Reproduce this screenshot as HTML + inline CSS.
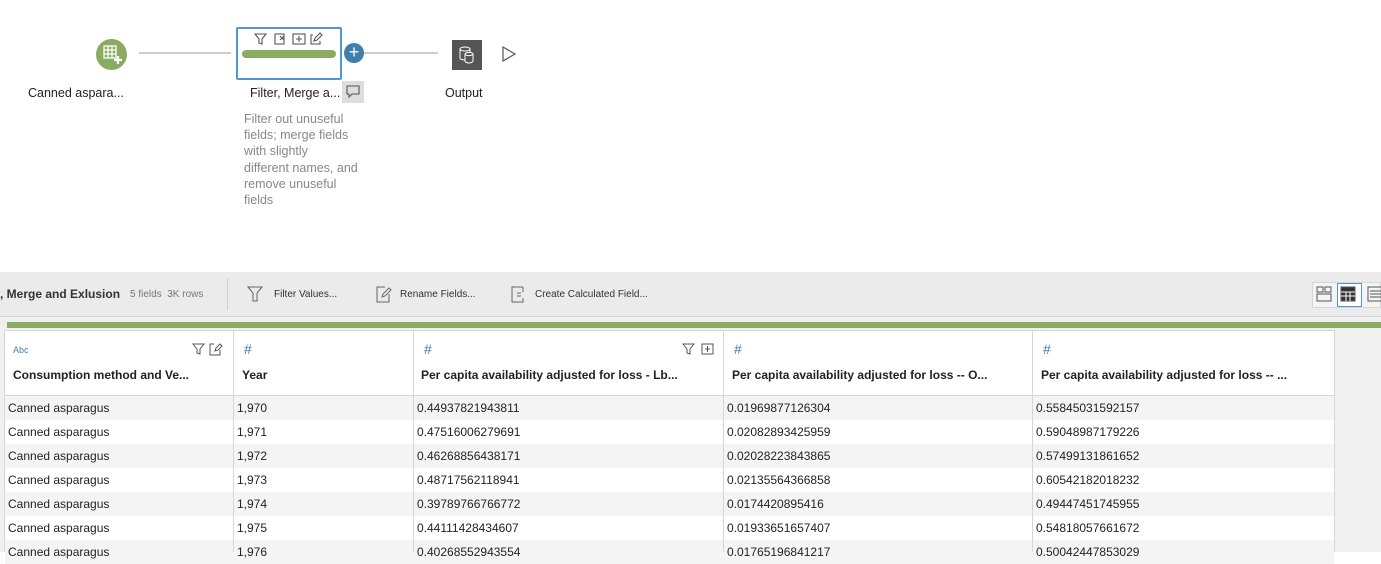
<!DOCTYPE html>
<html><head><style>
*{box-sizing:border-box;margin:0;padding:0}
body{width:1381px;height:552px;overflow:hidden;background:#fff;font-family:"Liberation Sans",sans-serif;position:relative;color:#333}
.a{position:absolute}
.lbl{font-size:12.5px;color:#222;white-space:nowrap}
.tb{font-size:10px;color:#333}
.hd{font-size:12px;font-weight:bold;color:#222}
.row{position:absolute;left:5px;width:1329px;height:24px;font-size:12px;color:#222}
.row span{position:absolute;top:5px}
.cl{position:absolute;top:330px;bottom:0;width:1px;background:#d6d6d6}
</style></head><body>
<!-- flow -->
<div class="a" style="left:139px;top:52px;width:92px;height:2px;background:#ccc"></div>
<div class="a" style="left:362px;top:52px;width:76px;height:2px;background:#ccc"></div>
<div class="a" style="left:96px;top:39px;width:31px;height:31px;border-radius:50%;background:#8aab62"></div>
<svg class="a" style="left:102px;top:44px" width="22" height="22" viewBox="0 0 22 22" fill="none" stroke="#fff" stroke-width="1.3"><rect x="2" y="2" width="12" height="12"/><path d="M2 6h12M2 10h12M6 2v12M10 2v12"/><path d="M16 12v8M12 16h8" stroke-width="2.2"/></svg>
<div class="a lbl" style="left:28px;top:86px">Canned aspara...</div>
<div class="a" style="left:236px;top:27px;width:106px;height:53px;border:2px solid #4f97d8;border-radius:2px;background:#fff"></div>
<div class="a" style="left:242px;top:50px;width:94px;height:8px;border-radius:4px;background:#8aab62"></div>
<svg class="a" style="left:254px;top:32px" width="74" height="14" viewBox="0 0 74 14" fill="none" stroke="#555" stroke-width="1.1"><path d="M1 2h11L8 7v5L5 11V7z"/><rect x="21" y="2" width="9" height="10"/><path d="M26 4l4 4M30 4l-4 4"/><rect x="39" y="2" width="12" height="10"/><path d="M42 7h6M45 4v6"/><path d="M59 3h-2v9h9v-3M60 9l1-3 5-5 2 2-5 5z"/></svg>
<div class="a" style="left:344px;top:43px;width:20px;height:20px;border-radius:50%;background:#3f7fae"></div>
<div class="a" style="left:344px;top:42px;width:20px;height:20px;color:#fff;font-size:18px;text-align:center;line-height:21px">+</div>
<div class="a" style="left:452px;top:40px;width:30px;height:30px;background:#555"></div>
<svg class="a" style="left:456px;top:44px" width="22" height="22" viewBox="0 0 22 22" fill="none" stroke="#fff" stroke-width="1"><ellipse cx="9" cy="5" rx="5" ry="2"/><path d="M4 5v9c0 1 2 2 5 2M14 5v3"/><ellipse cx="13" cy="10" rx="4" ry="1.6"/><path d="M9 10v7c0 1 2 2 4 2s4-1 4-2v-7"/></svg>
<svg class="a" style="left:501px;top:46px" width="16" height="16" viewBox="0 0 16 16"><path d="M2 1l12 7-12 7z" fill="none" stroke="#555" stroke-width="1.2"/></svg>
<div class="a lbl" style="left:250px;top:86px">Filter, Merge a...</div>
<div class="a" style="left:342px;top:81px;width:22px;height:22px;background:#ddd"></div>
<svg class="a" style="left:346px;top:85px" width="14" height="14" viewBox="0 0 14 14" fill="none" stroke="#555" stroke-width="1.1"><path d="M1 1h12v8H6l-3 3V9H1z"/></svg>
<div class="a lbl" style="left:445px;top:86px">Output</div>
<div class="a" style="left:244px;top:111px;font-size:12.5px;line-height:16.2px;color:#888">Filter out unuseful<br>fields; merge fields<br>with slightly<br>different names, and<br>remove unuseful<br>fields</div>
<!-- toolbar -->
<div class="a" style="left:0;top:272px;width:1381px;height:45px;background:#ebebeb;border-bottom:1px solid #d6d6d6"></div>
<div class="a" style="left:0;top:287px;font-size:12px;font-weight:bold;color:#333">, Merge and Exlusion</div>
<div class="a tb" style="left:130px;top:289px;color:#777">5 fields&nbsp;&nbsp;3K rows</div>
<div class="a" style="left:227px;top:278px;width:1px;height:32px;background:#d0d0d0"></div>
<svg class="a" style="left:247px;top:285px" width="16" height="18" viewBox="0 0 16 18" fill="none" stroke="#666" stroke-width="1"><path d="M1 2h14L10 8v8H6V8z"/></svg>
<div class="a tb" style="left:274px;top:289px">Filter Values...</div>
<svg class="a" style="left:376px;top:285px" width="16" height="18" viewBox="0 0 16 18" fill="none" stroke="#666" stroke-width="1"><path d="M9 2H1v15h12V9M6 12l1-3 6-6 2 2-6 6z"/></svg>
<div class="a tb" style="left:400px;top:289px">Rename Fields...</div>
<svg class="a" style="left:511px;top:285px" width="14" height="18" viewBox="0 0 14 18" fill="none" stroke="#666" stroke-width="1"><path d="M12 2H1v15h11v-4M12 7V2M6 8h4M6 11h4"/></svg>
<div class="a tb" style="left:535px;top:289px">Create Calculated Field...</div>
<div class="a" style="left:1312px;top:282px;width:69px;height:26px;background:#f4f4f4;border:1px solid #d6d6d6"></div>
<div class="a" style="left:1337px;top:283px;width:25px;height:24px;border:1px solid #4f97d8;background:#fff"></div>
<svg class="a" style="left:1316px;top:286px" width="65" height="17" viewBox="0 0 65 17" fill="none" stroke="#555" stroke-width="1"><rect x="1" y="1" width="6" height="5"/><rect x="9" y="1" width="6" height="5"/><rect x="1" y="8" width="14" height="7"/><rect x="25" y="1" width="14" height="14" fill="#333"/><path d="M25 6h14M25 10h14M30 6v9M34 6v9" stroke="#fff"/><rect x="52" y="1" width="14" height="14"/><path d="M54 5h12M54 8h12M54 11h12"/></svg>
<!-- grid area -->
<div class="a" style="left:0;top:317px;width:1381px;height:235px;background:#f0f0f0"></div>
<div class="a" style="left:7px;top:322px;width:1374px;height:6px;background:#8aab62"></div>
<div class="a" style="left:4px;top:330px;width:1331px;height:222px;background:#fff;border-left:1px solid #d6d6d6;border-top:1px solid #d6d6d6"></div>
<div class="a" style="left:5px;top:395px;width:1330px;height:1px;background:#d6d6d6"></div>
<div class="row" style="top:396px;background:#f4f4f4"></div>
<div class="row" style="top:444px;background:#f4f4f4"></div>
<div class="row" style="top:492px;background:#f4f4f4"></div>
<div class="row" style="top:540px;background:#f4f4f4"></div>
<div class="cl" style="left:233px"></div><div class="cl" style="left:413px"></div><div class="cl" style="left:723px"></div><div class="cl" style="left:1032px"></div><div class="cl" style="left:1334px"></div>
<div class="a" style="left:13px;top:345px;font-size:9px;color:#3f7fae">Abc</div>
<svg class="a" style="left:192px;top:342px" width="36" height="14" viewBox="0 0 36 14" fill="none" stroke="#555" stroke-width="1"><path d="M1 2h11L8 7v5L5 11V7z"/><path d="M22 2h-4v11h10V8M23 9l1-3 4-4 2 2-4 4z"/></svg>
<svg class="a" style="left:682px;top:342px" width="34" height="14" viewBox="0 0 34 14" fill="none" stroke="#555" stroke-width="1"><path d="M1 2h11L8 7v5L5 11V7z"/><rect x="20" y="2" width="11" height="10"/><path d="M23 7h5M25.5 4v6"/></svg>
<div class="a" style="left:244px;top:341px;font-size:14px;color:#3f7fae">#</div>
<div class="a" style="left:424px;top:341px;font-size:14px;color:#3f7fae">#</div>
<div class="a" style="left:734px;top:341px;font-size:14px;color:#3f7fae">#</div>
<div class="a" style="left:1043px;top:341px;font-size:14px;color:#3f7fae">#</div>
<div class="a hd" style="left:13px;top:368px">Consumption method and Ve...</div>
<div class="a hd" style="left:242px;top:368px">Year</div>
<div class="a hd" style="left:421px;top:368px">Per capita availability adjusted for loss -  Lb...</div>
<div class="a hd" style="left:732px;top:368px">Per capita availability adjusted for loss -- O...</div>
<div class="a hd" style="left:1041px;top:368px">Per capita availability adjusted for loss -- ...</div>
<div class="row" style="top:396px"><span style="left:3px">Canned asparagus</span><span style="left:232px">1,970</span><span style="left:412px">0.44937821943811</span><span style="left:722px">0.01969877126304</span><span style="left:1031px">0.55845031592157</span></div>
<div class="row" style="top:420px"><span style="left:3px">Canned asparagus</span><span style="left:232px">1,971</span><span style="left:412px">0.47516006279691</span><span style="left:722px">0.02082893425959</span><span style="left:1031px">0.59048987179226</span></div>
<div class="row" style="top:444px"><span style="left:3px">Canned asparagus</span><span style="left:232px">1,972</span><span style="left:412px">0.46268856438171</span><span style="left:722px">0.02028223843865</span><span style="left:1031px">0.57499131861652</span></div>
<div class="row" style="top:468px"><span style="left:3px">Canned asparagus</span><span style="left:232px">1,973</span><span style="left:412px">0.48717562118941</span><span style="left:722px">0.02135564366858</span><span style="left:1031px">0.60542182018232</span></div>
<div class="row" style="top:492px"><span style="left:3px">Canned asparagus</span><span style="left:232px">1,974</span><span style="left:412px">0.39789766766772</span><span style="left:722px">0.0174420895416</span><span style="left:1031px">0.49447451745955</span></div>
<div class="row" style="top:516px"><span style="left:3px">Canned asparagus</span><span style="left:232px">1,975</span><span style="left:412px">0.44111428434607</span><span style="left:722px">0.01933651657407</span><span style="left:1031px">0.54818057661672</span></div>
<div class="row" style="top:540px"><span style="left:3px">Canned asparagus</span><span style="left:232px">1,976</span><span style="left:412px">0.40268552943554</span><span style="left:722px">0.01765196841217</span><span style="left:1031px">0.50042447853029</span></div>
</body></html>
